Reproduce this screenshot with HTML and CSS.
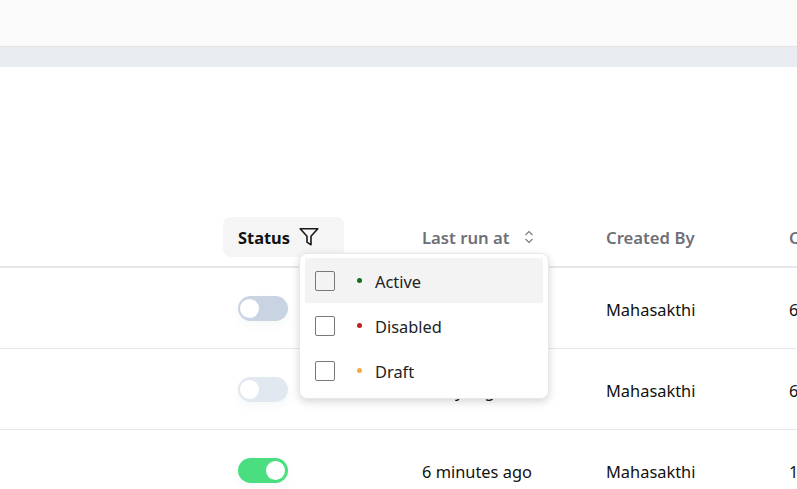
FILE: index.html
```html
<!DOCTYPE html>
<html lang="en">
<head>
<meta charset="utf-8">
<title>Jobs</title>
<link rel="stylesheet" href="styles.css">
</head>
<body>
<header class="topbar"></header>
<div class="band"></div>
<main class="table">
  <div class="row head">
    <div class="cell"></div>
    <div class="cell status-cell">
      <div class="th-active">
        <span class="th-label">Status</span>
        <svg class="filter" width="20" height="20" viewBox="0 0 20 20" fill="none" stroke="#1a1a1a" stroke-width="1.6" stroke-linejoin="round"><path d="M1.2 1.8h17.6l-6.8 7.4v8.6l-4-2.6V9.2z"/></svg>
      </div>
      <div class="popover">
        <div class="option hover"><span class="check"></span><span class="dot green"></span><span class="label">Active</span></div>
        <div class="option"><span class="check"></span><span class="dot red"></span><span class="label">Disabled</span></div>
        <div class="option"><span class="check"></span><span class="dot orange"></span><span class="label">Draft</span></div>
      </div>
    </div>
    <div class="cell th">Last run at
      <svg class="sort" width="10" height="14" viewBox="0 0 10 14" fill="none" stroke="#77777f" stroke-width="1.1"><path d="M1.5 5 5 1.5 8.5 5M1.5 9 5 12.5 8.5 9"/></svg>
    </div>
    <div class="cell th">Created By</div>
    <div class="cell th">Created at</div>
  </div>
  <div class="row body">
    <div class="cell"></div>
    <div class="cell toggle-cell"><span class="toggle off"></span></div>
    <div class="cell">1 hour ago</div>
    <div class="cell">Mahasakthi</div>
    <div class="cell">6 days ago</div>
  </div>
  <div class="row body">
    <div class="cell"></div>
    <div class="cell toggle-cell"><span class="toggle draft"></span></div>
    <div class="cell">2 days ago</div>
    <div class="cell">Mahasakthi</div>
    <div class="cell">6 days ago</div>
  </div>
  <div class="row body">
    <div class="cell"></div>
    <div class="cell toggle-cell"><span class="toggle on"></span></div>
    <div class="cell">6 minutes ago</div>
    <div class="cell">Mahasakthi</div>
    <div class="cell">1 day ago</div>
  </div>
</main>
</body>
</html>
```
FILE: styles.css
```css
* { box-sizing: border-box; }
html, body { margin: 0; height: 100%; overflow: hidden; background: #fff; }
body { font-family: "Noto Sans", "Open Sans", sans-serif; font-size: 16.4px; color: #111; }
.topbar { height: 47px; background: #fafafa; border-bottom: 1px solid #e3e3e5; }
.band { height: 20px; background: #e9edf2; }
.table { padding-top: 150px; width: 960px; }
.row { display: grid; grid-template-columns: 223px 184px 184px 183px 186px; }
.head { height: 51px; border-bottom: 2px solid #e6e6eb; align-items: start; }
.body { height: 81px; border-bottom: 1px solid #e8e8ea; align-items: center; }
.cell { padding-left: 15px; white-space: nowrap; }
.body .cell { padding-top: 2px; }
.body .toggle-cell { padding-top: 0; }
.status-cell { padding-left: 0; position: relative; }
.th { font-weight: 600; font-size: 16.7px; color: #6f6f78; height: 40px; display: flex; align-items: center; gap: 14px; }
.th-active { width: 121px; height: 40px; padding-left: 15px; display: flex; align-items: center; gap: 9px; font-weight: 700; color: #111; background: #f5f5f5; border-radius: 8px; }
.filter { display: block; }
.sort { display: block; }
.popover { position: absolute; left: 76px; top: 36px; width: 250px; height: 146px; padding: 4px 5px; background: #fff; border: 1px solid #e8e8ea; border-radius: 8px; box-shadow: 0 3px 8px rgba(0,0,0,.16); z-index: 2; font-weight: 400; font-size: 16.4px; }
.option { height: 45px; display: flex; align-items: center; padding-left: 10px; border-radius: 2px; color: #222; }
.option.hover { background: #f3f3f3; }
.check { width: 20px; height: 20px; border: 1px solid #77777c; border-radius: 2px; background: #fff; margin-right: 22px; }
.option.hover .check { background: #f3f3f3; }
.dot { width: 5px; height: 5px; border-radius: 50%; margin-right: 13px; }
.label { padding-top: 2px; }
.green { background: #146c1c; }
.red { background: #c01f24; }
.orange { background: #f5a941; }
.toggle { display: block; width: 50px; height: 25px; border-radius: 13px; position: relative; box-shadow: 0 4px 10px rgba(30,40,60,.04); }
.toggle::after { content: ""; position: absolute; top: 3px; left: 2px; width: 19px; height: 19px; border-radius: 50%; background: #fff; }
.toggle.off { background: #c9d4e2; }
.toggle.draft { background: #e2e8f0; }
.toggle.on { background: #4ade80; }
.toggle.on::after { left: 28px; }
```
